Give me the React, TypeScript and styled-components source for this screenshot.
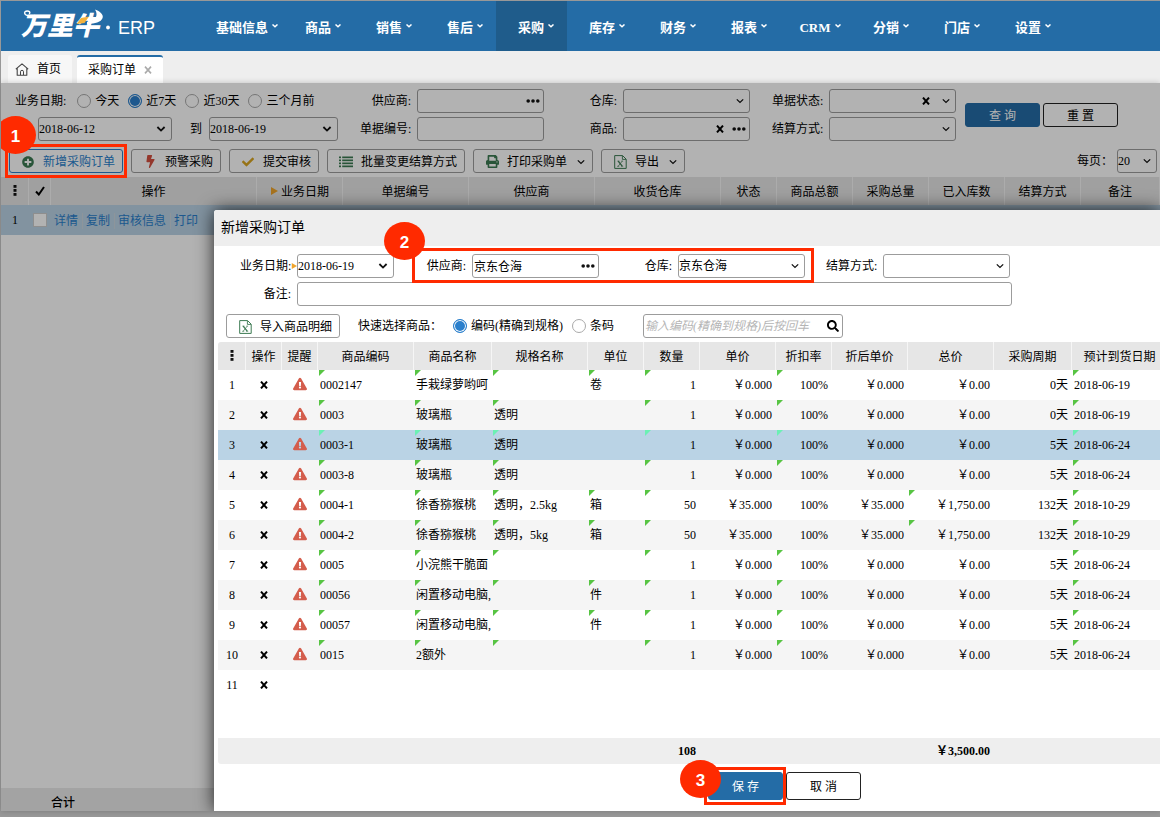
import React from 'react';
import styled, { createGlobalStyle, css } from 'styled-components';
import { FaPlusCircle, FaBolt, FaCheck, FaPrint, FaExclamationTriangle, FaSearch } from 'react-icons/fa';

const BLUE = '#246ca6';
const RED = '#ff2a00';

const GlobalStyle = createGlobalStyle`
  *, *::before, *::after { box-sizing: border-box; }
  body {
    margin: 0;
    font-family: "Liberation Serif", "Noto Sans CJK SC", serif;
    font-size: 12px;
    line-height: 16px;
    color: #000;
  }
  button, input, select { font: inherit; color: inherit; margin: 0; }
  a { text-decoration: none; }
`;

const Page = styled.div`
  display: flex;
  flex-direction: column;
  min-height: 100vh;
  padding: 1px 0 6px 1px;
  background: #989898;
  overflow: hidden;
`;

const TopBar = styled.header`
  display: flex;
  height: 50px;
  background: ${BLUE};
  color: #fff;
`;

const LogoLink = styled.a`
  flex: 0 0 201px;
  color: #fff;
`;

const Nav = styled.nav`
  display: flex;
`;

const NavItem = styled.a<{ $active?: boolean }>`
  display: flex;
  align-items: center;
  justify-content: center;
  gap: 4px;
  min-width: 71px;
  padding: 3px 5px 0 14px;
  font-size: 13px;
  font-weight: 700;
  color: #fff;
  background: ${p => (p.$active ? '#1f5c8b' : 'transparent')};
  svg { margin-bottom: 4px; }
`;

const TabBar = styled.div`
  display: flex;
  align-items: flex-end;
  gap: 5px;
  height: 32px;
  padding-left: 7px;
  background: #eeeeee;
`;

const Tab = styled.div<{ $active?: boolean }>`
  display: flex;
  align-items: center;
  gap: 8px;
  height: 28px;
  padding: 0 11px 0 ${p => (p.$active ? '11px' : '7px')};
  border-top: ${p => (p.$active ? `2px solid ${BLUE}` : '0')};
  border-radius: 3px 3px 0 0;
  background: ${p => (p.$active ? '#fff' : '#f7f7f7')};
`;

const IconButton = styled.button<{ $centered?: boolean }>`
  display: flex;
  align-items: center;
  justify-content: center;
  padding: 0;
  border: 0;
  background: none;
  && { margin: ${p => (p.$centered ? '0 auto' : '0')}; }
`;

const Workspace = styled.main`
  flex: 1;
  display: grid;
  grid-template: minmax(0, 1fr) / minmax(0, 1fr);
  position: relative;
`;

const OrderPage = styled.section`
  grid-area: 1 / 1;
  display: flex;
  flex-direction: column;
  background: #fff;
  overflow: clip;
`;

const Filters = styled.form`
  display: flex;
  align-items: center;
  padding: 6px 8px 8px 14px;
`;

const FilterColumn = styled.div<{ $width?: number }>`
  display: flex;
  flex-direction: column;
  gap: 4px;
  flex: none;
  width: ${p => (p.$width ? `${p.$width}px` : 'auto')};
`;

const FilterLine = styled.div<{ $indent?: number }>`
  display: flex;
  align-items: center;
  height: 24px;
  padding-left: ${p => p.$indent ?? 0}px;
`;

const FieldRow = styled.div<{ $gap?: number }>`
  display: flex;
  align-items: center;
  gap: 6px;
  margin-left: ${p => p.$gap ?? 0}px;
`;

const Caption = styled.label`
  flex: none;
  width: 51px;
  text-align: right;
  white-space: nowrap;
`;

const RangeCaption = styled.span`
  flex: none;
  margin-right: 2px;
`;

const ToText = styled.span`
  padding: 0 7px 0 18px;
`;

const Field = styled.span<{ $width: number }>`
  display: flex;
  align-items: center;
  position: relative;
  flex: none;
  width: ${p => p.$width}px;
  height: 24px;
  padding-right: 3px;
  border: 1px solid #9c9c9c;
  border-radius: 3px;
`;

const controlStyle = css`
  appearance: none;
  flex: 1;
  min-width: 0;
  height: 22px;
  border: 0;
  outline: 0;
  background: none;
`;

const TextInput = styled.input`
  ${controlStyle}
  padding: 0 0 0 1px;
  &::placeholder { color: #b5b5b5; font-style: italic; opacity: 1; }
`;

const SelectInput = styled.select`
  ${controlStyle}
  padding: 0;
`;

const FieldIcon = styled.span`
  display: flex;
  position: absolute;
  right: 5px;
  pointer-events: none;
`;

const ClearSlot = styled.span<{ $offset: number }>`
  display: flex;
  padding-right: ${p => p.$offset}px;
`;

const Radio = styled.label`
  display: flex;
  align-items: center;
  gap: 4px;
  margin-left: 9px;
  white-space: nowrap;
  input {
    appearance: none;
    width: 14px;
    height: 14px;
    border: 1px solid #aaa;
    border-radius: 50%;
    background: #fff;
  }
  input:checked {
    border-color: #2a7fcc;
    background: #2a7fcc;
    box-shadow: inset 0 0 0 1px #fff;
  }
`;

const SolidButton = styled.button<{ $tall?: boolean; $primary?: boolean }>`
  flex: none;
  width: 75px;
  height: ${p => (p.$tall ? 28 : 24)}px;
  padding: 1px 0 0;
  border: 1px solid ${p => (p.$primary ? BLUE : '#222')};
  border-radius: 3px;
  background: ${p => (p.$primary ? BLUE : '#fff')};
  color: ${p => (p.$primary ? '#fff' : '#000')};
`;

const ButtonPair = styled.div`
  display: flex;
  gap: 3px;
  margin-left: 9px;
`;

const Toolbar = styled.div`
  display: flex;
  align-items: center;
  gap: 8px;
  padding: 0 3px 4px 8px;
`;

const ToolButton = styled.button<{ $accent?: boolean }>`
  display: flex;
  align-items: center;
  flex: none;
  height: 24px;
  padding: 1px 7px 0 11px;
  border: 1px solid ${p => (p.$accent ? '#2a7fcc' : '#9c9c9c')};
  border-radius: 3px;
  background: #fff;
  color: ${p => (p.$accent ? '#2a7fcc' : '#000')};
  white-space: nowrap;
`;

const ToolIcon = styled.span<{ $color: string }>`
  display: flex;
  justify-content: center;
  width: 14px;
  margin-right: 8px;
  color: ${p => p.$color};
`;

const ToolArrow = styled.span`
  display: flex;
  margin-left: 10px;
`;

const PageSize = styled.div`
  display: flex;
  align-items: center;
  gap: 4px;
  margin-left: auto;
`;

const Table = styled.table<{ $minWidth?: number }>`
  width: 100%;
  min-width: ${p => p.$minWidth ?? 0}px;
  table-layout: fixed;
  border-collapse: separate;
  border-spacing: 0;
`;

const Th = styled.th`
  height: 28px;
  padding: 2px 0 0;
  border-right: 1px solid #f6f6f6;
  background: #e6e6e6;
  font-weight: 400;
  text-align: center;
  white-space: nowrap;
  svg { vertical-align: middle; margin-bottom: 4px; }
`;

const Tr = styled.tr<{ $tone?: 'plain' | 'stripe' | 'selected' }>`
  background: ${p => (p.$tone === 'selected' ? '#bad3e5' : p.$tone === 'stripe' ? '#f5f5f5' : '#fff')};
`;

const Td = styled.td<{ $align?: 'left' | 'center' | 'right'; $mark?: string }>`
  position: relative;
  height: 30px;
  padding: 0 ${p => (p.$align === 'right' ? 4 : 0)}px 0 ${p => (p.$align === 'left' ? 2 : 0)}px;
  text-align: ${p => p.$align ?? 'center'};
  white-space: nowrap;
  > svg { display: block; margin: 0 auto 2px; }
  ${p => p.$mark && css`
    &::before {
      content: "";
      position: absolute;
      left: 1px;
      top: 0;
      width: 6px;
      height: 6px;
      background: ${p.$mark};
      clip-path: polygon(0 0, 100% 0, 0 100%);
    }
  `}
`;

const RowCheck = styled.input`
  appearance: none;
  display: block;
  width: 14px;
  height: 14px;
  border: 1px solid #ccc;
  background: #fff;
  && { margin: 0 auto; }
`;

const RowLinks = styled.div`
  display: flex;
  padding: 1px 0 0 1px;
  a { color: #2a7fcc; }
  a + a { margin-left: 4px; padding-left: 3px; border-left: 1px solid #cbd6de; }
`;

const SumBar = styled.footer`
  height: 23px;
  margin-top: auto;
  padding-left: 50px;
  line-height: 30px;
  background: #eaeaea;
  font-weight: 500;
  overflow: hidden;
`;

const Overlay = styled.div`
  grid-area: 1 / 1;
  z-index: 1;
  display: flex;
  padding: 127px 0 0 213px;
  background: rgba(0, 0, 0, 0.3);
  box-shadow: 0 0 6px rgba(0, 0, 0, 0.2);
  overflow: clip;
`;

const Dialog = styled.section`
  flex: 1;
  min-width: 0;
  display: flex;
  flex-direction: column;
  background: #fff;
  border-radius: 3px 0 0 0;
  box-shadow: 0 0 18px rgba(0, 0, 0, 0.8);
`;

const DialogTitle = styled.h2`
  margin: 0;
  padding-left: 7px;
  font-size: 14px;
  font-weight: 400;
  line-height: 36px;
  background: #eeeeee;
  border-radius: 3px 0 0 0;
`;

const DialogForm = styled.form`
  display: flex;
  flex-direction: column;
  gap: 4px;
  padding: 8px 0 8px 26px;
`;

const DialogLine = styled.div`
  display: flex;
  align-items: center;
  gap: 21px;
`;

const RequiredMark = styled.span`
  display: flex;
  width: 6px;
  margin: 0 -6px;
`;

const QuickPick = styled.div`
  display: flex;
  align-items: center;
  padding: 0 0 4px 12px;
`;

const QuickLabel = styled.span`
  margin-left: 18px;
  margin-right: 2px;
`;

const QuickField = styled.div`
  margin-left: 29px;
`;

const GridArea = styled.div`
  flex: 1;
  display: flex;
  flex-direction: column;
  margin-left: 4px;
  overflow: hidden;
  border-radius: 3px 0 0 3px;
`;

const TotalTable = styled(Table)`
  margin-top: auto;
  background: #eeeeee;
  font-weight: 700;
  td { height: 26px; }
`;

const DialogActions = styled.div`
  display: flex;
  gap: 3px;
  padding: 8px 0 11px 494px;
`;

const Callout = styled.span<{ $gap?: number }>`
  display: flex;
  align-items: center;
  gap: ${p => p.$gap ?? 0}px;
  position: relative;
`;

const CalloutFrame = styled.span<{ $inset: string }>`
  position: absolute;
  inset: ${p => p.$inset};
  z-index: 2;
  border: 3px solid ${RED};
  pointer-events: none;
`;

const CalloutBadge = styled.span<{ $left: number; $top: number }>`
  position: absolute;
  left: ${p => p.$left}px;
  top: ${p => p.$top}px;
  z-index: 2;
  display: flex;
  align-items: center;
  justify-content: center;
  width: 41px;
  height: 38px;
  padding-top: 4px;
  border-radius: 50%;
  background: ${RED};
  color: #fff;
  font-family: "Liberation Sans", sans-serif;
  font-size: 17px;
  font-weight: 700;
  pointer-events: none;
`;

const Chevron = ({ bold }: { bold?: boolean }) => (
  <svg width={bold ? 10 : 8} height="8" viewBox={bold ? '0 0 10 8' : '0 0 8 8'} fill="none" stroke="#111" strokeWidth={bold ? 1.8 : 1.3}>
    <path d={bold ? 'M1.4 2 5 5.6 8.6 2' : 'M.8 2.4 4 5.4 7.2 2.4'} />
  </svg>
);

const Dots = () => (
  <svg width="14" height="6" viewBox="0 0 14 6" fill="#111">
    <circle cx="2.2" cy="3" r="1.8" /><circle cx="7" cy="3" r="1.8" /><circle cx="11.8" cy="3" r="1.8" />
  </svg>
);

const Cross = ({ color = '#000', width = 2 }: { color?: string; width?: number }) => (
  <svg width="8" height="8" viewBox="0 0 8 8" stroke={color} strokeWidth={width}>
    <path d="M1 .6 7 7.4M7 .6 1 7.4" />
  </svg>
);

const Grip = () => (
  <svg width="4" height="12" viewBox="0 0 4 12" fill="#111">
    <rect x=".5" y="0" width="3" height="2.8" /><rect x=".5" y="4" width="3" height="2.8" /><rect x=".5" y="8" width="3" height="2.8" />
  </svg>
);

const Arrow = ({ size = 8 }: { size?: number }) => (
  <svg width={size} height={size} viewBox="0 0 8 8" fill="#f0a52c"><path d="M1 0 8 4 1 8Z" /></svg>
);

const ListIcon = () => (
  <svg width="14" height="12" viewBox="0 0 14 12" fill="currentColor">
    {[0, 3, 6, 9].map(y => (
      <React.Fragment key={y}>
        <rect x="0" y={y + 0.5} width="2" height="1.7" /><rect x="3.2" y={y + 0.5} width="10.8" height="1.7" />
      </React.Fragment>
    ))}
  </svg>
);

const ExcelIcon = () => (
  <svg width="13" height="14" viewBox="0 0 13 14" fill="none" stroke="currentColor">
    <path d="M.7 .6H8.6L12.2 4.2V13.4H.7Z" strokeWidth="1" />
    <path d="M8.4 .8V4.4H12" strokeWidth=".9" />
    <path d="M4.2 6.2 8.2 11.2" strokeWidth="1.3" />
    <path d="M8.2 6.2 4.2 11.2M3.4 6.1H5.4M7.3 6.1H9.1M3.2 11.3H5.2M7.2 11.3H9.2" strokeWidth=".7" />
  </svg>
);

const HomeIcon = () => (
  <svg width="14" height="13" viewBox="0 0 14 13" fill="none" stroke="#444" strokeWidth="1.1" strokeLinejoin="round">
    <path d="M.8 6.2 7 .8 13.2 6.2M2.2 5.2V12.2H11.8V5.2" />
    <path d="M5.5 12V8.8A1.5 1.5 0 0 1 8.5 8.8V12" strokeWidth="1" />
  </svg>
);

const Logo = () => (
  <svg width="180" height="50" viewBox="0 0 180 50" role="img" aria-label="万里牛 ERP">
    <text x="20" y="34" fill="#fff" fontFamily="'Noto Sans CJK SC', sans-serif" fontSize="26" fontWeight="900" fontStyle="italic">万里牛</text>
    <path d="M34 14.500C28 16.500 22 13.500 24 10.800C26 9 30 10.500 28.500 12.500" fill="none" stroke="#fff" strokeWidth="1.4" strokeLinecap="round" />
    <path d="M94 8.500C104.500 12 105 20.500 92 22.500L86 23V21C94 20 98 15 94 8.500Z" fill="#fff" />
    <path d="M80 17 88 15.500 83.500 22 75.500 23Z" fill="#f3b23c" />
    <circle cx="107" cy="26.500" r="1.9" fill="#fff" />
    <text x="117" y="33" fill="#fff" fontFamily="'Liberation Sans', sans-serif" fontSize="18">ERP</text>
  </svg>
);

const NAV = ['基础信息', '商品', '销售', '售后', '采购', '库存', '财务', '报表', 'CRM', '分销', '门店', '设置'];

const ORDER_COLUMNS: [React.ReactNode, number | undefined][] = [
  [<Grip />, 28],
  [<svg width="10" height="10" viewBox="0 0 10 10" fill="none" stroke="#000" strokeWidth="2"><path d="M1 5.500 3.800 8.500 9 1" /></svg>, 22],
  ['操作', 206],
  [<><Arrow /> 业务日期</>, 86],
  ['单据编号', 126], ['供应商', 126], ['收货仓库', 126], ['状态', 56],
  ['商品总额', 76], ['采购总量', 76], ['已入库数', 76], ['结算方式', 76], ['备注', undefined],
];

const ITEM_COLUMNS: [React.ReactNode, number | undefined][] = [
  [<Grip />, 28], ['操作', 36], ['提醒', 36], ['商品编码', 96], ['商品名称', 78], ['规格名称', 96],
  ['单位', 56], ['数量', 56], ['单价', 76], ['折扣率', 56], ['折后单价', 76], ['总价', 86],
  ['采购周期', 78], ['预计到货日期', undefined],
];

interface Item {
  code: string; name: string; spec?: string; unit?: string;
  qty?: string; price?: string; total?: string; cycle: string; due: string;
}

const ITEMS: Item[] = [
  { code: '0002147', name: '手栽绿萝哟呵', unit: '卷', cycle: '0天', due: '2018-06-19' },
  { code: '0003', name: '玻璃瓶', spec: '透明', cycle: '0天', due: '2018-06-19' },
  { code: '0003-1', name: '玻璃瓶', spec: '透明', cycle: '5天', due: '2018-06-24' },
  { code: '0003-8', name: '玻璃瓶', spec: '透明', cycle: '5天', due: '2018-06-24' },
  { code: '0004-1', name: '徐香猕猴桃', spec: '透明，2.5kg', unit: '箱', qty: '50', price: '￥35.000', total: '￥1,750.00', cycle: '132天', due: '2018-10-29' },
  { code: '0004-2', name: '徐香猕猴桃', spec: '透明，5kg', unit: '箱', qty: '50', price: '￥35.000', total: '￥1,750.00', cycle: '132天', due: '2018-10-29' },
  { code: '0005', name: '小浣熊干脆面', cycle: '5天', due: '2018-06-24' },
  { code: '00056', name: '闲置移动电脑,', unit: '件', cycle: '5天', due: '2018-06-24' },
  { code: '00057', name: '闲置移动电脑,', unit: '件', cycle: '5天', due: '2018-06-24' },
  { code: '0015', name: '2额外', cycle: '5天', due: '2018-06-24' },
];

const Columns = ({ columns }: { columns: [React.ReactNode, number | undefined][] }) => (
  <colgroup>{columns.map(([, width], i) => <col key={i} width={width} />)}</colgroup>
);

const HeadRow = ({ columns }: { columns: [React.ReactNode, number | undefined][] }) => (
  <thead><tr>{columns.map(([title], i) => <Th key={i} scope="col">{title}</Th>)}</tr></thead>
);

interface PickerProps {
  id: string; width: number; value?: string; kind?: 'text' | 'select' | 'date' | 'lookup'; clear?: boolean; label?: string;
}

const Picker = ({ id, width, value = '', kind = 'text', clear, label }: PickerProps) => {
  const isSelect = kind === 'select' || kind === 'date';
  return (
    <Field $width={width}>
      {isSelect
        ? <SelectInput id={id} aria-label={label} defaultValue={value}><option>{value}</option></SelectInput>
        : <TextInput id={id} aria-label={label} defaultValue={value} />}
      {clear && (
        <ClearSlot $offset={isSelect ? 22 : 8}>
          <IconButton type="button" aria-label="清除"><Cross /></IconButton>
        </ClearSlot>
      )}
      {isSelect && <FieldIcon><Chevron bold={kind === 'date'} /></FieldIcon>}
      {kind === 'lookup' && <IconButton type="button" aria-label="选择"><Dots /></IconButton>}
    </Field>
  );
};

const Labeled = ({ title, gap, mark, ...picker }: PickerProps & { title: string; gap?: number; mark?: boolean }) => (
  <FieldRow $gap={gap}>
    <Caption htmlFor={picker.id}>{title}:</Caption>
    {mark && <RequiredMark><Arrow size={6} /></RequiredMark>}
    <Picker {...picker} />
  </FieldRow>
);

const DeleteButton = () => (
  <IconButton type="button" aria-label="删除" $centered><Cross /></IconButton>
);

const ItemRow = ({ item, index }: { item: Item; index: number }) => {
  const selected = index === 2;
  const mark = selected ? '#6cf0b4' : '#57c443';
  return (
    <Tr $tone={selected ? 'selected' : index % 2 ? 'stripe' : 'plain'}>
      <Td>{index + 1}</Td>
      <Td><DeleteButton /></Td>
      <Td><FaExclamationTriangle size={14} color="#d45d4c" /></Td>
      <Td $align="left" $mark={mark}>{item.code}</Td>
      <Td $align="left" $mark={mark}>{item.name}</Td>
      <Td $align="left" $mark={mark}>{item.spec}</Td>
      <Td $align="left" $mark={item.unit && mark}>{item.unit}</Td>
      <Td $align="right" $mark={mark}>{item.qty ?? '1'}</Td>
      <Td $align="right">{item.price ?? '￥0.000'}</Td>
      <Td $align="right" $mark={item.total ? undefined : mark}>100%</Td>
      <Td $align="right">{item.price ?? '￥0.000'}</Td>
      <Td $align="right" $mark={item.total && mark}>{item.total ?? '￥0.00'}</Td>
      <Td $align="right">{item.cycle}</Td>
      <Td $align="left" $mark={mark}>{item.due}</Td>
    </Tr>
  );
};

const NewOrderDialog = () => (
  <Dialog role="dialog" aria-labelledby="dialog-title">
    <DialogTitle id="dialog-title">新增采购订单</DialogTitle>
    <DialogForm>
      <DialogLine>
        <Labeled id="d-date" title="业务日期" width={97} kind="date" value="2018-06-19" mark />
        <Callout $gap={22}>
          <Labeled id="d-supplier" title="供应商" width={127} kind="lookup" value="京东仓海" />
          <Labeled id="d-store" title="仓库" width={127} kind="select" value="京东仓海" />
          <CalloutFrame $inset="-6px -9px -5px -3px" />
          <CalloutBadge $left={-31} $top={-32}>2</CalloutBadge>
        </Callout>
        <Labeled id="d-settle" title="结算方式" width={127} kind="select" />
      </DialogLine>
      <DialogLine>
        <Labeled id="d-note" title="备注" width={715} />
      </DialogLine>
    </DialogForm>
    <QuickPick>
      <ToolButton type="button"><ToolIcon $color="#3c7a52"><ExcelIcon /></ToolIcon>导入商品明细</ToolButton>
      <QuickLabel>快速选择商品：</QuickLabel>
      <Radio><input type="radio" name="pick" defaultChecked />编码(精确到规格)</Radio>
      <Radio><input type="radio" name="pick" />条码</Radio>
      <QuickField>
        <Field $width={200}>
          <TextInput aria-label="商品编码" placeholder="输入编码(精确到规格)后按回车" />
          <IconButton type="button" aria-label="搜索"><FaSearch size={12} /></IconButton>
        </Field>
      </QuickField>
    </QuickPick>
    <GridArea>
      <Table $minWidth={950}>
        <Columns columns={ITEM_COLUMNS} />
        <HeadRow columns={ITEM_COLUMNS} />
        <tbody>
          {ITEMS.map((item, i) => <ItemRow key={item.code} item={item} index={i} />)}
          <Tr>
            <Td>11</Td>
            <Td><DeleteButton /></Td>
            <Td colSpan={12} />
          </Tr>
        </tbody>
      </Table>
      <TotalTable $minWidth={950}>
        <Columns columns={ITEM_COLUMNS} />
        <tbody>
          <tr>
            <Td colSpan={7} />
            <Td $align="right">108</Td>
            <Td colSpan={3} />
            <Td $align="right">￥3,500.00</Td>
            <Td colSpan={2} />
          </tr>
        </tbody>
      </TotalTable>
    </GridArea>
    <DialogActions>
      <Callout>
        <SolidButton type="button" $tall $primary>保 存</SolidButton>
        <CalloutFrame $inset="-5px -3px -5px -4px" />
        <CalloutBadge $left={-28} $top={-12}>3</CalloutBadge>
      </Callout>
      <SolidButton type="button" $tall>取 消</SolidButton>
    </DialogActions>
  </Dialog>
);

export default function App() {
  return (
    <Page>
      <GlobalStyle />
      <TopBar>
        <LogoLink href="#"><Logo /></LogoLink>
        <Nav>
          {NAV.map(name => (
            <NavItem key={name} href="#" $active={name === '采购'}>
              {name}
              <svg width="6" height="4" viewBox="0 0 6 4" fill="none" stroke="#fff" strokeWidth="1.5"><path d="M.5 .5 3 2.800 5.500 .5" /></svg>
            </NavItem>
          ))}
        </Nav>
      </TopBar>
      <TabBar>
        <Tab><HomeIcon />首页</Tab>
        <Tab $active>采购订单<IconButton type="button" aria-label="关闭"><Cross color="#aaa" width={1.6} /></IconButton></Tab>
      </TabBar>
      <Workspace>
        <OrderPage>
          <Filters>
            <FilterColumn $width={323}>
              <FilterLine>
                <RangeCaption>业务日期:</RangeCaption>
                <Radio><input type="radio" name="range" />今天</Radio>
                <Radio><input type="radio" name="range" defaultChecked />近7天</Radio>
                <Radio><input type="radio" name="range" />近30天</Radio>
                <Radio><input type="radio" name="range" />三个月前</Radio>
              </FilterLine>
              <FilterLine $indent={23}>
                <Picker id="f-from" label="开始日期" width={134} kind="date" value="2018-06-12" />
                <ToText>到</ToText>
                <Picker id="f-to" label="结束日期" width={129} kind="date" value="2018-06-19" />
              </FilterLine>
            </FilterColumn>
            <FilterColumn>
              <Labeled id="f-supplier" title="供应商" gap={22} width={127} kind="lookup" />
              <Labeled id="f-number" title="单据编号" gap={22} width={127} />
            </FilterColumn>
            <FilterColumn>
              <Labeled id="f-store" title="仓库" gap={22} width={127} kind="select" />
              <Labeled id="f-goods" title="商品" gap={22} width={127} kind="lookup" clear />
            </FilterColumn>
            <FilterColumn>
              <Labeled id="f-status" title="单据状态" gap={22} width={127} kind="select" clear />
              <Labeled id="f-settle" title="结算方式" gap={22} width={127} kind="select" />
            </FilterColumn>
            <ButtonPair>
              <SolidButton type="button" $primary>查 询</SolidButton>
              <SolidButton type="reset">重 置</SolidButton>
            </ButtonPair>
          </Filters>
          <Toolbar>
            <Callout>
              <ToolButton type="button" $accent><ToolIcon $color="#3c7a52"><FaPlusCircle size={12} /></ToolIcon>新增采购订单</ToolButton>
              <CalloutFrame $inset="-5px -4px" />
              <CalloutBadge $left={-14} $top={-33}>1</CalloutBadge>
            </Callout>
            <ToolButton type="button"><ToolIcon $color="#d4503f"><FaBolt size={13} /></ToolIcon>预警采购</ToolButton>
            <ToolButton type="button"><ToolIcon $color="#d9a520"><FaCheck size={12} /></ToolIcon>提交审核</ToolButton>
            <ToolButton type="button"><ToolIcon $color="#3c7a52"><ListIcon /></ToolIcon>批量变更结算方式</ToolButton>
            <ToolButton type="button"><ToolIcon $color="#3c7a52"><FaPrint size={13} /></ToolIcon>打印采购单<ToolArrow><Chevron /></ToolArrow></ToolButton>
            <ToolButton type="button"><ToolIcon $color="#3c7a52"><ExcelIcon /></ToolIcon>导出<ToolArrow><Chevron /></ToolArrow></ToolButton>
            <PageSize>
              <label htmlFor="page-size">每页：</label>
              <Picker id="page-size" width={40} kind="select" value="20" />
            </PageSize>
          </Toolbar>
          <Table>
            <Columns columns={ORDER_COLUMNS} />
            <HeadRow columns={ORDER_COLUMNS} />
            <tbody>
              <Tr $tone="selected">
                <Td>1</Td>
                <Td><RowCheck type="checkbox" aria-label="选择第1行" /></Td>
                <Td $align="left">
                  <RowLinks><a href="#">详情</a><a href="#">复制</a><a href="#">审核信息</a><a href="#">打印</a></RowLinks>
                </Td>
                <Td colSpan={10} />
              </Tr>
            </tbody>
          </Table>
          <SumBar>合计</SumBar>
        </OrderPage>
        <Overlay>
          <NewOrderDialog />
        </Overlay>
      </Workspace>
    </Page>
  );
}
